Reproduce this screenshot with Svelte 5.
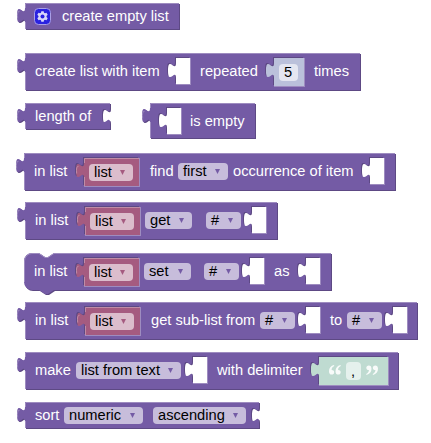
<script>
  const TAB_DOWN = 'v5 c0,10 -8,-8 -8,7.5 s8,-2.5 8,7.5';
  const TAB_UP = 'V20 c0,-10 -8,8 -8,-7.5 s8,2.5 8,-7.5';
  const SOCKET = `M0,0 H14 V26 H0 ${TAB_UP} z`;
  const QUOTE =
    'M5,0 C1.8,.8 0,3 0,6.2 C0,8.5 1,9.6 2.7,9.6 C4.2,9.6 5.2,8.6 5.2,7.2 C5.2,5.8 4.2,4.9 2.6,4.9 C2.6,3 3.6,1.8 5.3,1z M11.5,0 C8.3,.8 6.5,3 6.5,6.2 C6.5,8.5 7.5,9.6 9.2,9.6 C10.7,9.6 11.7,8.6 11.7,7.2 C11.7,5.8 10.7,4.9 9.1,4.9 C9.1,3 10.1,1.8 11.8,1z';

  const label = (x, w, text) => ({ kind: 'label', x, w, text });
  const drop = (x, w, text) => ({ kind: 'drop', x, w, text });
  const socket = (x) => ({ kind: 'socket', x, w: 14 });
  const variable = (x) => ({ kind: 'child', tone: 'rose', x, w: 55, h: 28, text: 'list' });

  const blocks = [
    { x: 25, y: 3, w: 154, h: 26, items: [{ kind: 'gear', x: 9, w: 17 }, label(37, 108, 'create empty list')] },
    {
      x: 25, y: 53, w: 335, h: 37,
      items: [
        label(10, 126, 'create list with item'), socket(151), label(175, 58, 'repeated'),
        { kind: 'child', tone: 'blue', x: 249, w: 30, h: 28, text: '5' }, label(289, 36, 'times')
      ]
    },
    { x: 25, y: 103, w: 85, h: 26, open: true, items: [label(10, 57, 'length of')] },
    { x: 150, y: 103, w: 105, h: 35, items: [socket(17), label(40, 55, 'is empty')] },
    {
      x: 24, y: 153, w: 371, h: 37,
      items: [label(10, 34, 'in list'), variable(60), label(126, 24, 'find'), drop(154, 50, 'first'),
        label(209, 121, 'occurrence of item'), socket(346)]
    },
    {
      x: 25, y: 202, w: 252, h: 37,
      items: [label(10, 34, 'in list'), variable(60), drop(120, 47, 'get'), drop(181, 35, '#'), socket(227)]
    },
    {
      x: 24, y: 253, w: 307, h: 37, stack: true,
      items: [label(10, 34, 'in list'), variable(60), drop(120, 47, 'set'), drop(180, 35, '#'), socket(226),
        label(250, 16, 'as'), socket(282)]
    },
    {
      x: 25, y: 302, w: 392, h: 37,
      items: [label(10, 34, 'in list'), variable(60), label(126, 105, 'get sub-list from'), drop(235, 35, '#'),
        socket(281), label(305, 12, 'to'), drop(322, 35, '#'), socket(368)]
    },
    {
      x: 25, y: 352, w: 373, h: 37,
      items: [label(10, 36, 'make'), drop(51, 105, 'list from text'), socket(168), label(192, 86, 'with delimiter'),
        { kind: 'child', tone: 'mint', x: 294, w: 69, h: 28, text: ',' }]
    },
    {
      x: 25, y: 402, w: 234, h: 26, open: true,
      items: [label(10, 25, 'sort'), drop(39, 79, 'numeric'), drop(128, 93, 'ascending')]
    }
  ];

  function outline(b) {
    if (b.stack) {
      return `M0,8 A8,8 0 0 1 8,0 H15 l6,4 3,0 6,-4 H${b.w} V${b.h} H30 l-6,4 -3,0 -6,-4 H8 a8,8 0 0 1 -8,-8 z`;
    }
    return `M0,0 H${b.w} ${b.open ? TAB_DOWN : ''} V${b.h} H0 ${TAB_UP} z`;
  }

  function highlight(b) {
    if (b.stack) {
      return `M.5,${b.h - 8} V8 A7.5,7.5 0 0 1 8,.5 H15 l6,4 3,0 6,-4 H${b.w}`;
    }
    return `M.5,${b.h} V19 M-7.3,15.5 Q-8.2,8 -5.5,8.3 M.5,5 V.5 H${b.w}`;
  }

  const gap = (items, i) => items[i].x - (i ? items[i - 1].x + items[i - 1].w : 0);
</script>

{#snippet arrow()}
  <svg class="arrow" width="5" height="5"><path d="M0,0 H5 L2.5,5z" /></svg>
{/snippet}

{#snippet quote(turn)}
  <svg class="quote" width="12" height="10"><path d={QUOTE} transform="rotate({turn} 6 5)" /></svg>
{/snippet}

<main>
  {#each blocks as b}
    <section class="block" class:short={b.h === 26} style="left:{b.x}px;top:{b.y}px;width:{b.w}px;height:{b.h}px">
      <svg class="shape" width={b.w} height={b.h}>
        <path class="dark" d={outline(b)} transform="translate(1,1)" />
        <path class="body" d={outline(b)} />
        <path class="light" d={highlight(b)} />
      </svg>
      {#each b.items as it, i}
        <div class="item {it.kind}" style="width:{it.w}px;margin-left:{gap(b.items, i)}px">
          {#if it.kind === 'label'}
            {it.text}
          {:else if it.kind === 'drop'}
            <span>{it.text}</span>{@render arrow()}
          {:else if it.kind === 'gear'}
            <svg width="17" height="17" viewBox="0 0 17 17">
              <rect x=".5" y=".5" width="16" height="16" rx="4" fill="#2a22e0" stroke="#a99fe6" />
              <path
                fill="#d9d7fa"
                d="M7.3,3.2h2.4l.3,1.5 1,.6 1.5,-.5 1.2,2 -1.2,1.1v1.2l1.2,1.1 -1.2,2 -1.5,-.5 -1,.6 -.3,1.5H7.3l-.3,-1.5 -1,-.6 -1.5,.5 -1.2,-2 1.2,-1.1V7.9L3.3,6.8l1.2,-2 1.5,.5 1,-.6z"
              />
              <circle cx="8.5" cy="8.5" r="2" fill="#2a22e0" />
            </svg>
          {:else if it.kind === 'socket'}
            <svg class="shape" width="14" height="26">
              <path class="dark" d={SOCKET} transform="translate(-1,-1)" />
              <path class="glow" d="M14,0 h1 v27 h-15 v-1 h14z" />
              <path class="hole" d={SOCKET} />
            </svg>
          {:else}
            <div class="value {it.tone}">
              <svg class="shape" width={it.w} height={it.h}>
                <path class="dark" d={outline(it)} transform="translate(-1,-1)" />
                <path class="glow" d="M{it.w},0 h1 v{it.h + 1} h-{it.w + 1} v-1 h{it.w}z" />
                <path class="body" d={outline(it)} />
                <path class="inner" d={highlight(it)} />
              </svg>
              {#if it.tone === 'mint'}{@render quote(0)}{/if}
              <div class="field">
                <span>{it.text}</span>
                {#if it.tone === 'rose'}{@render arrow()}{/if}
              </div>
              {#if it.tone === 'mint'}{@render quote(180)}{/if}
            </div>
          {/if}
        </div>
      {/each}
    </section>
  {/each}
</main>

<style>
  main {
    position: relative;
    width: 431px;
    height: 443px;
    overflow: hidden;
    background: #fff;
    font: 14.667px/17px 'Liberation Sans', Arial, sans-serif;
  }
  .block {
    --body: #745ba5;
    position: absolute;
    display: flex;
    align-items: flex-start;
    padding-top: 5px;
    box-sizing: border-box;
  }
  .shape {
    position: absolute;
    left: 0;
    top: 0;
    overflow: visible;
  }
  .body { fill: var(--body); }
  .dark { fill: #5d4984; }
  .hole { fill: #fff; }
  .glow { fill: #9e8cc0; }
  .light { fill: none; stroke: #9e8cc0; }
  .inner { fill: none; stroke: var(--edge); }
  .item {
    position: relative;
    flex: none;
    white-space: nowrap;
  }
  .label { margin-top: 5px; color: #fff; }
  .gear { height: 17px; }
  .gear svg { display: block; }
  .socket { height: 26px; }
  .drop,
  .field {
    display: flex;
    align-items: center;
    justify-content: space-between;
    box-sizing: border-box;
    height: 17px;
    padding: 0 5px;
    border-radius: 4px;
    background: rgba(255, 255, 255, 0.6);
    color: #000;
  }
  .drop { margin-top: 5px; padding-right: 8px; }
  .short .label,
  .short .drop { margin-top: 0; }
  .arrow { fill: var(--body); flex: none; }
  .value {
    display: flex;
    box-sizing: border-box;
    height: 28px;
    padding: 6px 6px 0 5px;
  }
  .value .field { position: relative; flex: 1; }
  .rose { --body: #a55b80; --edge: #c08ca6; }
  .rose .field { padding-right: 8px; }
  .blue { --body: #bbc1db; --edge: #bbc1db; }
  .mint { --body: #bfdbd1; --edge: #bfdbd1; padding: 5px 10px; gap: 5px; }
  .mint .field { height: 18px; line-height: 19px; }
  .quote { position: relative; top: 3px; flex: none; fill: #fff; opacity: 0.9; }
</style>
